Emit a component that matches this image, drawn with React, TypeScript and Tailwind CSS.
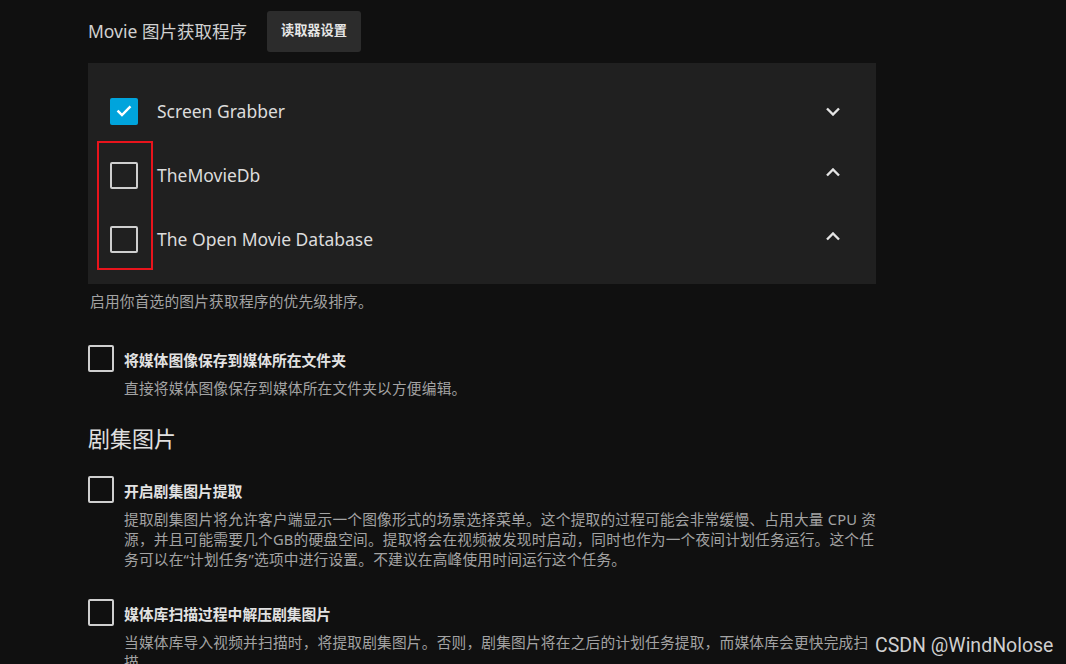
import React from 'react';

const font = { fontFamily: '"Noto Sans", "Noto Sans CJK SC", sans-serif' };

const Box: React.FC<{ checked?: boolean; size: string }> = ({ checked, size }) => {
    if (checked) {
        return (
            <div className={`${size} rounded-[2px] bg-[#00a4dc] flex items-center justify-center shrink-0`}>
                <svg width="18" height="18" viewBox="0 0 24 24" fill="none" stroke="white" strokeWidth="3.2" strokeLinecap="square">
                    <path d="M4.5 12.5l4.8 4.8L19.5 7" />
                </svg>
            </div>
        );
    }
    return <div className={`${size} border-2 border-[#cfcfcf] rounded-[2px] shrink-0`} />;
};

const Chevron: React.FC<{ up?: boolean }> = ({ up }) => (
    <svg width="14" height="9" viewBox="0 0 14 9" fill="none" stroke="#e4e4e4" strokeWidth="2.4" className={up ? '-mt-[6px]' : ''}>
        {up ? <path d="M1 7.5l6-6 6 6" /> : <path d="M1 1.5l6 6 6-6" />}
    </svg>
);

const fetchers = [
    { name: 'Screen Grabber', checked: true, up: false },
    { name: 'TheMovieDb', checked: false, up: true },
    { name: 'The Open Movie Database', checked: false, up: true },
];

const Option: React.FC<{ label: string; lines: string[] }> = ({ label, lines }) => (
    <div className="flex items-start">
        <Box size="w-[26px] h-[27px]" />
        <div className="ml-[10px] pt-[5px]">
            <div className="text-[14.8px] font-bold text-[#e2e2e2] leading-[20px]">{label}</div>
            <div className="mt-[8px] text-[14.7px] tracking-[0.2px] text-[#a3a3a3] leading-[20px]">
                {lines.map(l => (
                    <div key={l} className="whitespace-nowrap">{l}</div>
                ))}
            </div>
        </div>
    </div>
);

export default function App() {
    return (
        <div className="relative w-[1066px] h-[664px] overflow-hidden bg-[#101010]" style={font}>
            <div className="w-[788px] ml-[88px]">
                <div className="flex items-center h-[61px] pt-[1px]">
                    <span className="text-[17.5px] text-[#d0d0d0]">Movie 图片获取程序</span>
                    <button className="ml-[20px] h-[41px] w-[94px] rounded-[3px] bg-[#2c2c2c] text-[13.2px] font-bold text-[#e6e6e6]">
                        读取器设置
                    </button>
                </div>

                <div className="mt-[2px] bg-[#202020] h-[221px] pt-[16px] relative">
                    {fetchers.map(f => (
                        <div key={f.name} className="flex items-center h-[64px] pl-[22px] pr-[36px]">
                            <Box checked={f.checked} size="w-[28px] h-[27px]" />
                            <span className="ml-[19px] text-[17.5px] text-[#dcdcdc] flex-1">{f.name}</span>
                            <Chevron up={f.up} />
                        </div>
                    ))}
                    <div className="absolute left-[9px] top-[78px] w-[56px] h-[129px] border-2 border-[#e8141c]" />
                </div>

                <div className="mt-[7px] ml-[2px] text-[14.7px] tracking-[0.2px] text-[#a3a3a3] leading-[20px]">启用你首选的图片获取程序的优先级排序。</div>

                <div className="mt-[34px]">
                    <Option label="将媒体图像保存到媒体所在文件夹" lines={['直接将媒体图像保存到媒体所在文件夹以方便编辑。']} />
                </div>

                <div className="mt-[25px] text-[22px] text-[#e0e0e0] leading-[30px]">剧集图片</div>

                <div className="mt-[23px]">
                    <Option
                        label="开启剧集图片提取"
                        lines={[
                            '提取剧集图片将允许客户端显示一个图像形式的场景选择菜单。这个提取的过程可能会非常缓慢、占用大量 CPU 资',
                            '源，并且可能需要几个GB的硬盘空间。提取将会在视频被发现时启动，同时也作为一个夜间计划任务运行。这个任',
                            '务可以在“计划任务”选项中进行设置。不建议在高峰使用时间运行这个任务。',
                        ]}
                    />
                </div>

                <div className="mt-[30px]">
                    <Option
                        label="媒体库扫描过程中解压剧集图片"
                        lines={[
                            '当媒体库导入视频并扫描时，将提取剧集图片。否则，剧集图片将在之后的计划任务提取，而媒体库会更快完成扫',
                            '描。',
                        ]}
                    />
                </div>
            </div>

            <div className="absolute left-[875px] top-[632px] text-[19.5px] leading-[28px] text-[#cfcfcf]" style={{ fontFamily: 'Roboto, "Liberation Sans", sans-serif' }}>
                CSDN @WindNolose
            </div>
        </div>
    );
}
